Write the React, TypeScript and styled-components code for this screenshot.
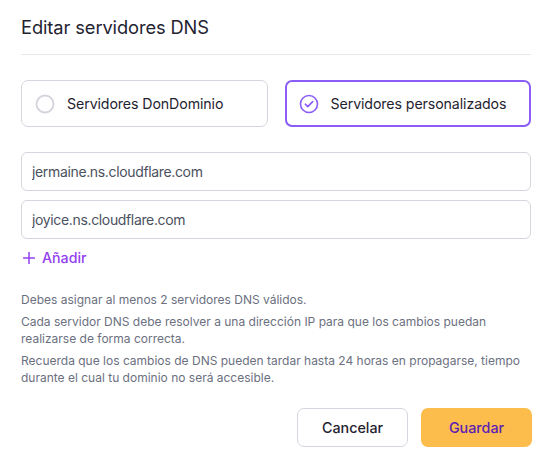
import React, { useState } from "react";
import styled, { createGlobalStyle } from "styled-components";

const Global = createGlobalStyle`
  html, body { margin: 0; padding: 0; background: #ffffff; }
  body { font-family: Inter, "Noto Sans", sans-serif; -webkit-font-smoothing: antialiased; }
  * { box-sizing: border-box; }
`;

const Dialog = styled.div`
  width: 552px;
  padding: 15px 21px 22px;
  display: flex;
  flex-direction: column;
`;

const Title = styled.h2`
  margin: 0;
  font-size: 18.3px;
  font-weight: 400;
  color: #1f2330;
  line-height: 24px;
  letter-spacing: -0.1px;
`;

const Divider = styled.hr`
  margin: 15px 0 25px;
  border: none;
  border-top: 1px solid #e5e7eb;
`;

const Options = styled.div`
  display: grid;
  grid-template-columns: 1fr 1fr;
  gap: 17px;
`;

const OptionCard = styled.button<{ $active: boolean }>`
  height: 47px;
  display: flex;
  align-items: center;
  gap: 12px;
  padding: 0 ${(p) => (p.$active ? 12 : 13)}px;
  background: #ffffff;
  border: ${(p) => (p.$active ? "2px solid #8b5cf6" : "1px solid #d6d7de")};
  border-radius: 7px;
  font: inherit;
  font-size: 14.2px;
  letter-spacing: -0.1px;
  color: #1f2330;
  cursor: pointer;
  text-align: left;
  white-space: nowrap;
`;

const Fields = styled.div`
  margin-top: 25px;
  display: flex;
  flex-direction: column;
  gap: 9px;
`;

const Field = styled.input`
  height: 39px;
  width: 100%;
  padding: 0 10px;
  border: 1px solid #d6d7de;
  border-radius: 6px;
  font: inherit;
  font-size: 14px;
  letter-spacing: -0.35px;
  color: #4b5160;
  background: #ffffff;
  outline: none;
`;

const AddLink = styled.button`
  margin-top: 10px;
  align-self: flex-start;
  display: flex;
  align-items: center;
  gap: 7px;
  padding: 0 0 0 2px;
  border: none;
  background: none;
  font: inherit;
  font-size: 14.2px;
  font-weight: 500;
  color: #9340f0;
  cursor: pointer;
`;

const Notes = styled.div`
  margin-top: 25px;
  display: flex;
  flex-direction: column;
  gap: 5px;
`;

const Note = styled.p`
  margin: 0;
  font-size: 12px;
  line-height: 17px;
  color: #6b7080;
`;

const Actions = styled.div`
  margin-top: 22px;
  margin-right: -1px;
  display: flex;
  justify-content: flex-end;
  gap: 13px;
`;

const ActionButton = styled.button<{ $primary?: boolean }>`
  width: 111px;
  height: 39px;
  border-radius: 7px;
  font: inherit;
  font-size: 14.3px;
  font-weight: 500;
  cursor: pointer;
  border: ${(p) => (p.$primary ? "none" : "1px solid #d6d7de")};
  background: ${(p) => (p.$primary ? "#fdbd4c" : "#ffffff")};
  color: ${(p) => (p.$primary ? "#5b21b6" : "#1f2330")};
`;

const RadioEmpty = () => (
  <svg width="20" height="20" viewBox="0 0 20 20">
    <circle cx="10" cy="10" r="8.5" fill="none" stroke="#d4d5dc" strokeWidth="1.8" />
  </svg>
);

const RadioChecked = () => (
  <svg width="20" height="20" viewBox="0 0 20 20">
    <circle cx="10" cy="10" r="8.5" fill="none" stroke="#8b5cf6" strokeWidth="1.6" />
    <path d="M6.3 10.2 L8.8 12.6 L13.7 7.6" fill="none" stroke="#8b5cf6" strokeWidth="1.6" strokeLinecap="round" strokeLinejoin="round" />
  </svg>
);

const PlusIcon = () => (
  <svg width="12" height="12" viewBox="0 0 12 12">
    <path d="M6 0.5 V11.5 M0.5 6 H11.5" stroke="#9340f0" strokeWidth="1.5" strokeLinecap="round" />
  </svg>
);

export default function App() {
  const [mode, setMode] = useState<"own" | "custom">("custom");
  const servers = ["jermaine.ns.cloudflare.com", "joyice.ns.cloudflare.com"];
  return (
    <>
      <Global />
      <Dialog>
        <Title>Editar servidores DNS</Title>
        <Divider />
        <Options>
          <OptionCard $active={mode === "own"} onClick={() => setMode("own")}>
            {mode === "own" ? <RadioChecked /> : <RadioEmpty />}
            Servidores DonDominio
          </OptionCard>
          <OptionCard $active={mode === "custom"} onClick={() => setMode("custom")}>
            {mode === "custom" ? <RadioChecked /> : <RadioEmpty />}
            Servidores personalizados
          </OptionCard>
        </Options>
        <Fields>
          {servers.map((s) => (
            <Field key={s} defaultValue={s} />
          ))}
        </Fields>
        <AddLink>
          <PlusIcon />
          Añadir
        </AddLink>
        <Notes>
          <Note>Debes asignar al menos 2 servidores DNS válidos.</Note>
          <Note>Cada servidor DNS debe resolver a una dirección IP para que los cambios puedan realizarse de forma correcta.</Note>
          <Note>Recuerda que los cambios de DNS pueden tardar hasta 24 horas en propagarse, tiempo durante el cual tu dominio no será accesible.</Note>
        </Notes>
        <Actions>
          <ActionButton>Cancelar</ActionButton>
          <ActionButton $primary>Guardar</ActionButton>
        </Actions>
      </Dialog>
    </>
  );
}
